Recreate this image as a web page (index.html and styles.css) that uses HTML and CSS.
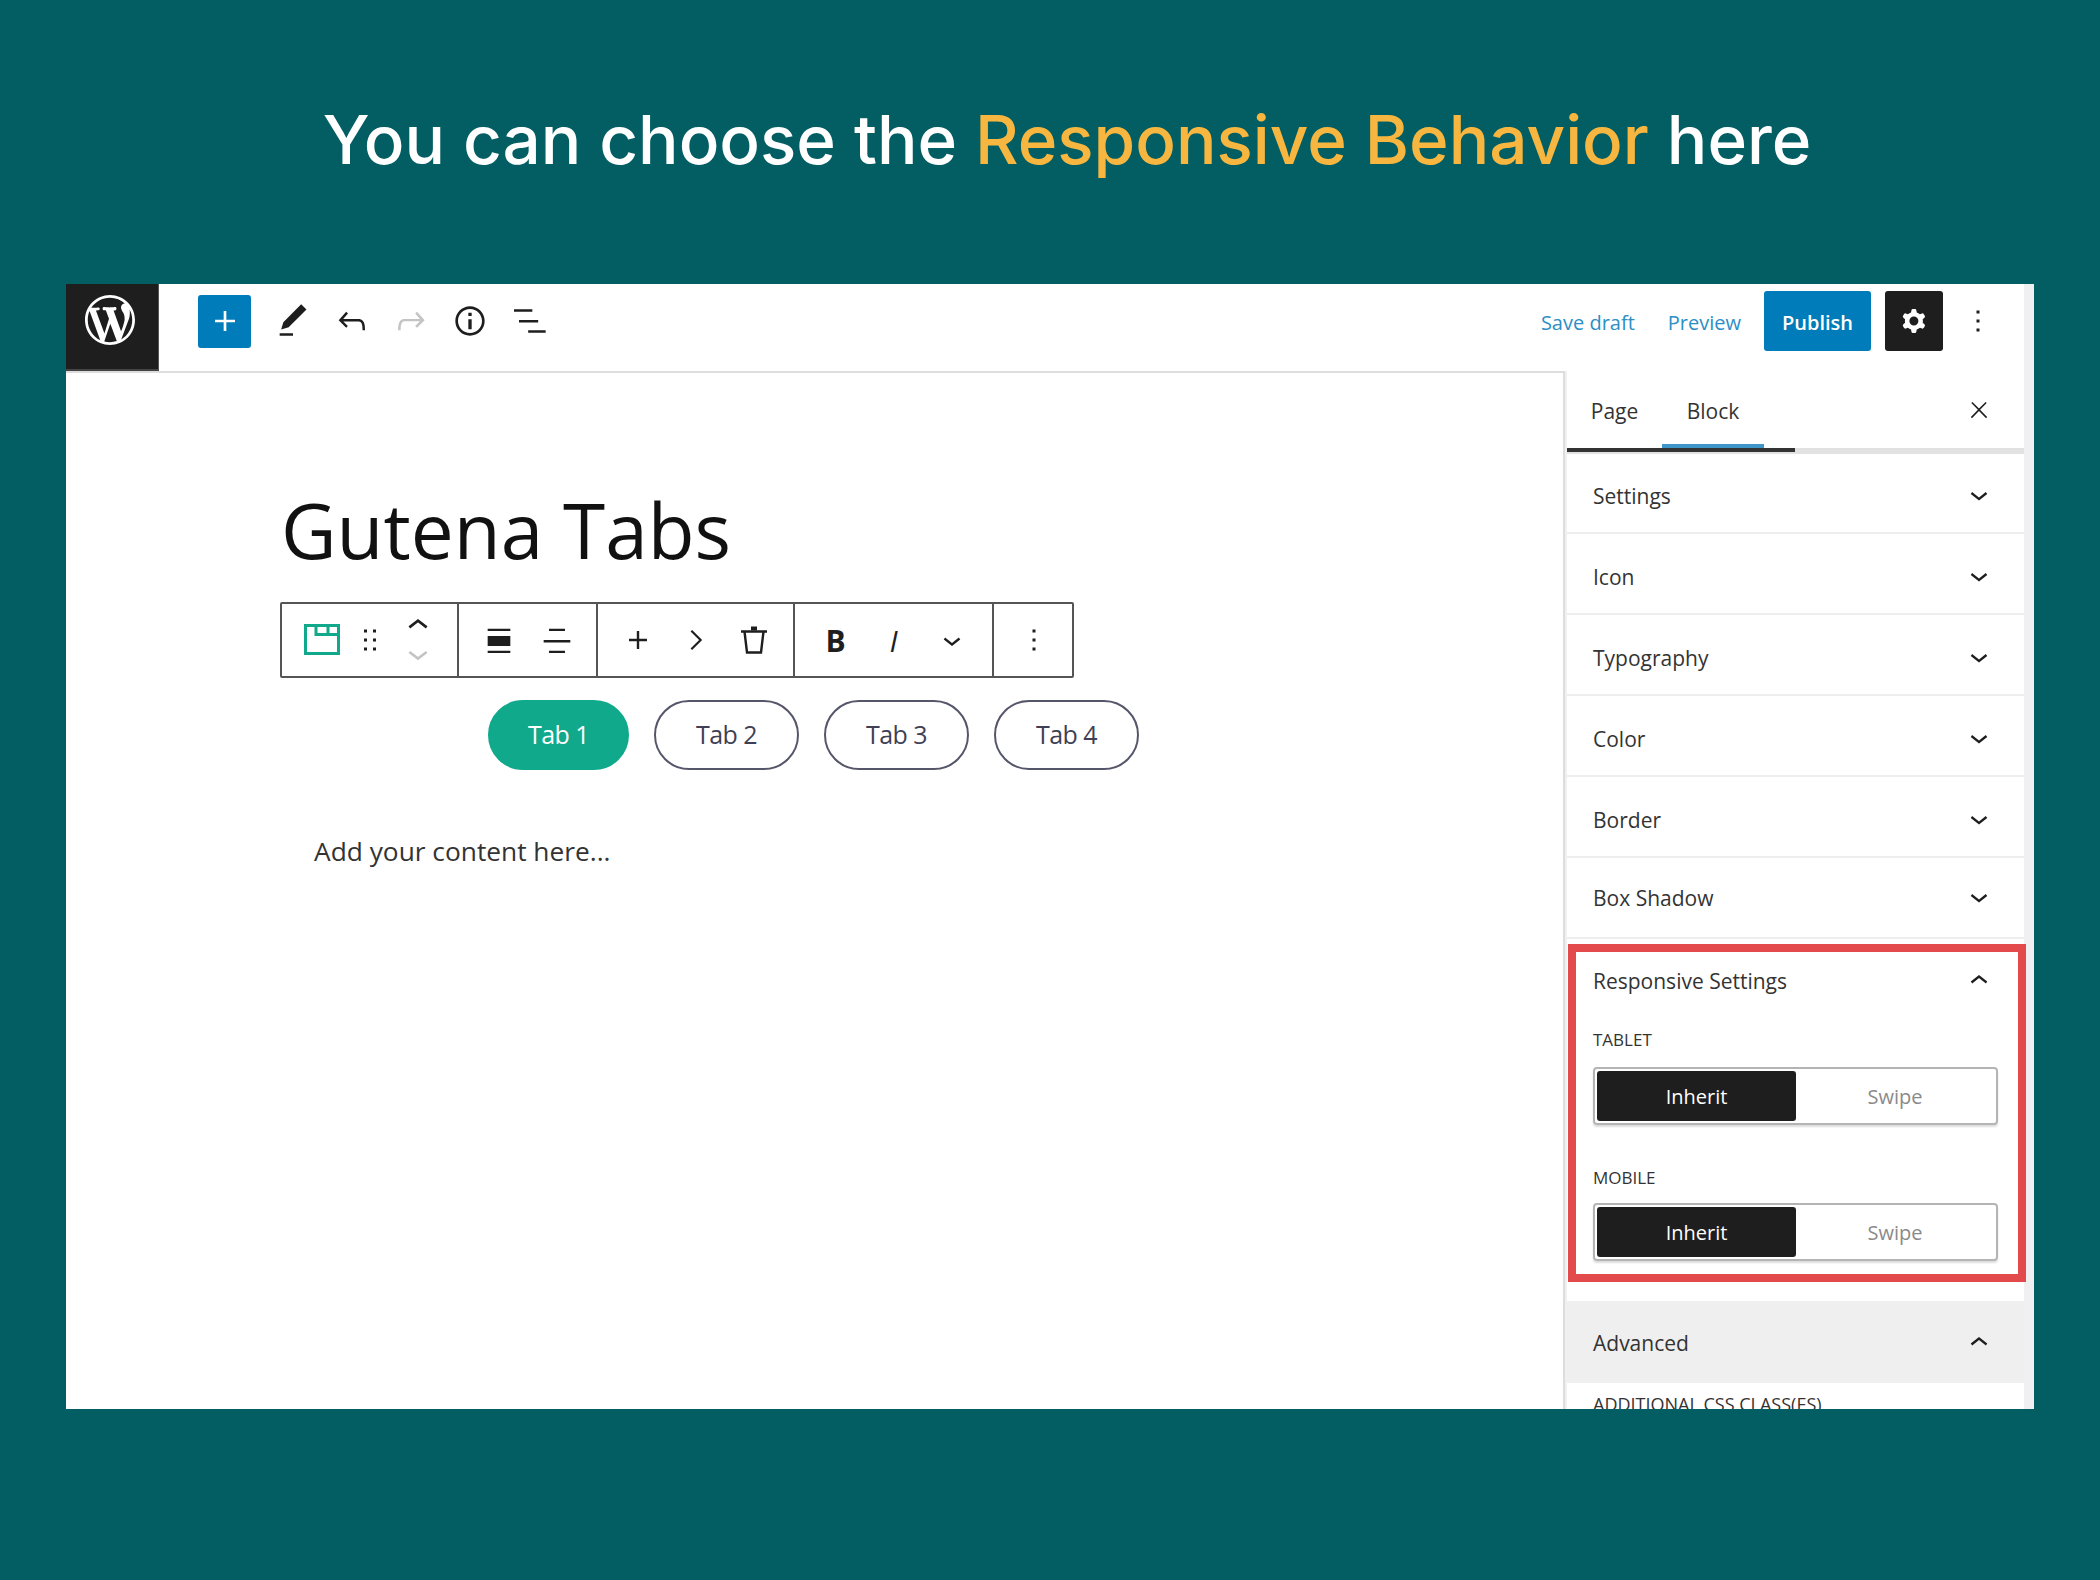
FILE: index.html
```html
<!DOCTYPE html>
<html lang="en">
<head>
<meta charset="utf-8">
<title>Responsive Behavior</title>
<link rel="stylesheet" href="styles.css">
</head>
<body>
<h1 class="headline">You can choose the <span class="accent">Responsive Behavior</span> here</h1>
<div class="frame">
  <header class="topbar">
    <div class="wp-block">
      <svg class="wp-logo" viewBox="0 0 20 20"><path fill="#fff" d="M20 10c0-5.51-4.49-10-10-10C4.48 0 0 4.49 0 10c0 5.52 4.48 10 10 10 5.51 0 10-4.48 10-10zM7.78 15.37L4.37 6.22c.55-.02 1.17-.08 1.17-.08.5-.06.44-1.13-.06-1.11 0 0-1.45.11-2.37.11-.18 0-.37 0-.58-.01C4.12 2.69 6.87 1.11 10 1.11c2.33 0 4.45.87 6.05 2.34-.68-.11-1.65.39-1.65 1.58 0 .74.45 1.36.9 2.1.35.61.55 1.36.55 2.46 0 1.49-1.4 5-1.4 5l-3.03-8.37c.54-.02.82-.17.82-.17.5-.05.44-1.25-.06-1.22 0 0-1.44.12-2.38.12-.87 0-2.33-.12-2.33-.12-.5-.03-.56 1.2-.06 1.22l.92.08 1.26 3.41zM17.41 10c.24-.64.74-1.87.43-4.25.7 1.29 1.05 2.71 1.05 4.25 0 3.29-1.73 6.24-4.4 7.78.97-2.59 1.94-5.2 2.92-7.78zM6.1 18.09C3.12 16.65 1.11 13.53 1.11 10c0-1.3.23-2.48.72-3.59C3.25 10.3 4.67 14.2 6.1 18.09zm4.03-6.63l2.58 6.98c-.86.29-1.76.45-2.71.45-.79 0-1.57-.11-2.29-.33.81-2.38 1.62-4.74 2.42-7.1z"/></svg>
    </div>
    <div class="tools">
      <span class="inserter"><svg class="ico-lg" viewBox="0 0 24 24"><path fill="#fff" d="M18 11.2h-5.2V6h-1.6v5.2H6v1.6h5.2V18h1.600v-5.200H18z"/></svg></span>
      <span class="tool"><svg class="ico-lg" viewBox="0 0 24 24"><path fill="#1e1e1e" d="M20.1 5.1L16.9 2 6.2 12.7l-1.3 4.4 4.5-1.3L20.1 5.1zM4 20.8h8v-1.500H4v1.500z"/></svg></span>
      <span class="tool"><svg class="ico-lg" viewBox="0 0 24 24"><path fill="#1e1e1e" d="M18.3 11.7c-.6-.6-1.4-.9-2.3-.9H6.7l2.9-3.3-1.1-1-4.5 5L8.5 16l1-1-2.7-2.7H16c.5 0 .9.2 1.3.5 1 1 1 3.4 1 4.5v.3h1.5v-.2c0-1.5 0-4.3-1.5-5.7z"/></svg></span>
      <span class="tool"><svg class="ico-lg" viewBox="0 0 24 24"><path fill="#c4c4c4" d="M15.6 6.5l-1.1 1 2.9 3.3H8c-.9 0-1.7.3-2.3.9-1.4 1.5-1.4 4.2-1.4 5.6v.2h1.5v-.3c0-1.1 0-3.5 1-4.5.3-.3.7-.5 1.3-.5h9.2L14.5 15l1.1 1.1 4.6-4.6-4.6-5z"/></svg></span>
      <span class="tool"><svg class="ico-lg" viewBox="0 0 24 24"><path fill="#1e1e1e" d="M12 3.2c-4.8 0-8.8 3.9-8.8 8.8 0 4.8 3.9 8.800 8.800 8.800 4.800 0 8.800-3.900 8.800-8.800 0-4.800-4-8.800-8.800-8.800zm0 16c-4 0-7.200-3.300-7.200-7.200C4.800 8 8 4.800 12 4.800s7.200 3.300 7.200 7.200c0 4-3.200 7.200-7.200 7.200zM11 17h2v-6h-2v6zm0-8h2V7h-2v2z"/></svg></span>
      <span class="tool"><svg class="ico-lg" viewBox="0 0 24 24"><path fill="#1e1e1e" d="M3 5h11v1.500H3zM6 11.400h11.500v1.500H6zM11.500 17.600H22v1.500H11.500z"/></svg></span>
    </div>
    <div class="actions">
      <span class="link">Save draft</span>
      <span class="link">Preview</span>
      <span class="publish">Publish</span>
      <span class="settings"><svg class="ico-md" viewBox="0 0 24 24"><path fill="#fff" fill-rule="evenodd" d="M10.289 4.836A1 1 0 0111.275 4h1.306a1 1 0 01.987.836l.244 1.466c.787.26 1.503.679 2.108 1.218l1.393-.522a1 1 0 011.216.437l.653 1.13a1 1 0 01-.23 1.273l-1.148.944a6.025 6.025 0 010 2.435l1.149.946a1 1 0 01.23 1.272l-.653 1.13a1 1 0 01-1.216.437l-1.394-.522c-.605.54-1.32.958-2.108 1.218l-.244 1.466a1 1 0 01-.987.836h-1.306a1 1 0 01-.986-.836l-.244-1.466a5.995 5.995 0 01-2.108-1.218l-1.394.522a1 1 0 01-1.217-.436l-.653-1.131a1 1 0 01.23-1.272l1.149-.946a6.026 6.026 0 010-2.435l-1.148-.944a1 1 0 01-.23-1.272l.653-1.131a1 1 0 011.217-.437l1.393.522a5.994 5.994 0 012.108-1.218l.244-1.466zM14.929 12a3 3 0 11-6 0 3 3 0 016 0z"/></svg></span>
      <span class="kebab"><svg class="ico-md" viewBox="0 0 24 24"><path fill="#1e1e1e" d="M13 19h-2v-2h2v2zm0-6h-2v-2h2v2zm0-6h-2V5h2v2z"/></svg></span>
    </div>
  </header>
  <div class="workspace">
    <main class="canvas">
      <div class="post-title">Gutena Tabs</div>
      <div class="block-toolbar">
        <div class="tb-group">
          <span class="tb-btn"><svg class="ico-table" viewBox="0 0 36 32"><path fill="none" stroke="#10a98b" stroke-width="3" d="M1.500 1.500h33v28h-33zM12 1.500V10.500h22.500M24 1.500v9"/></svg></span>
          <span class="tb-btn tb-narrow"><svg class="ico-md" viewBox="0 0 24 24"><path fill="#1e1e1e" d="M8 7h2V5H8v2zm0 6h2v-2H8v2zm0 6h2v-2H8v2zm6-14v2h2V5h-2zm0 8h2v-2h-2v2zm0 6h2v-2h-2v2z"/></svg></span>
          <span class="tb-btn"><svg class="ico-mover" viewBox="0 0 24 36"><path fill="none" stroke="#1e1e1e" stroke-width="2" d="M5.500 8.500l6.500-5 6.500 5"/><path fill="none" stroke="#c4c4c4" stroke-width="2" d="M5.500 27l6.500 5 6.500-5"/></svg></span>
        </div>
        <div class="tb-group">
          <span class="tb-btn"><svg class="ico" viewBox="0 0 24 24"><path fill="#1e1e1e" d="M3.500 3.500h17v1.800h-17zM3.500 9h17v7.500h-17zM3.500 20h17v1.800h-17z"/></svg></span>
          <span class="tb-btn"><svg class="ico" viewBox="0 0 24 24"><path fill="#1e1e1e" d="M6 3.500h12v1.800H6zM2 12h20v1.800H2zM6 20h12v1.800H6z"/></svg></span>
        </div>
        <div class="tb-group">
          <span class="tb-btn"><svg class="ico-md" viewBox="0 0 24 24"><path fill="#1e1e1e" d="M18 11.200h-5.200V6h-1.600v5.200H6v1.600h5.200V18h1.600v-5.200H18z"/></svg></span>
          <span class="tb-btn"><svg class="ico" viewBox="0 0 24 24"><path fill="none" stroke="#1e1e1e" stroke-width="1.600" d="M8.500 5l7 7-7 7"/></svg></span>
          <span class="tb-btn"><svg class="ico" viewBox="0 0 32 32"><path fill="none" stroke="#1e1e1e" stroke-width="2.400" d="M3 7.500h26M6.500 7.500l2.500 21h14l2.500-21"/><path fill="#1e1e1e" d="M13 2.500h6v4h-6z"/></svg></span>
        </div>
        <div class="tb-group tb-group-text">
          <span class="tb-btn tb-bold">B</span>
          <span class="tb-btn tb-italic">I</span>
          <span class="tb-btn"><svg class="ico-md" viewBox="0 0 24 24"><path fill="#1e1e1e" d="M17.500 11.600L12 16l-5.500-4.400.9-1.200L12 14l4.500-3.600 1 1.200z"/></svg></span>
        </div>
        <div class="tb-group">
          <span class="tb-btn"><svg class="ico-md" viewBox="0 0 24 24"><path fill="#1e1e1e" d="M13 19h-2v-2h2v2zm0-6h-2v-2h2v2zm0-6h-2V5h2v2z"/></svg></span>
        </div>
      </div>
      <div class="tabs">
        <span class="tab tab-active">Tab 1</span>
        <span class="tab">Tab 2</span>
        <span class="tab">Tab 3</span>
        <span class="tab">Tab 4</span>
      </div>
      <p class="placeholder">Add your content here...</p>
    </main>
    <aside class="sidebar">
      <div class="side-inner">
        <div class="side-tabs">
          <span class="side-tab">Page</span>
          <span class="side-tab side-tab-active">Block</span>
          <svg class="side-close" viewBox="0 0 24 24"><path fill="#1e1e1e" d="M13 11.800l6.100-6.300-1-1-6.100 6.200-6.100-6.200-1 1 6.100 6.300-6.500 6.700 1 1 6.500-6.600 6.500 6.600 1-1z"/></svg>
        </div>
        <div class="side-track"><div class="side-thumb"></div></div>
        <div class="panel-row panel-row-first"><span>Settings</span><svg class="ico-md" viewBox="0 0 24 24"><path fill="#1e1e1e" d="M17.500 10.600L12 15l-5.500-4.400.9-1.200L12 13l4.500-3.600 1 1.200z"/></svg></div>
        <div class="panel-row"><span>Icon</span><svg class="ico-md" viewBox="0 0 24 24"><path fill="#1e1e1e" d="M17.500 10.600L12 15l-5.500-4.400.9-1.200L12 13l4.500-3.600 1 1.200z"/></svg></div>
        <div class="panel-row"><span>Typography</span><svg class="ico-md" viewBox="0 0 24 24"><path fill="#1e1e1e" d="M17.500 10.600L12 15l-5.500-4.400.9-1.200L12 13l4.500-3.600 1 1.200z"/></svg></div>
        <div class="panel-row"><span>Color</span><svg class="ico-md" viewBox="0 0 24 24"><path fill="#1e1e1e" d="M17.500 10.600L12 15l-5.500-4.400.9-1.200L12 13l4.500-3.600 1 1.200z"/></svg></div>
        <div class="panel-row"><span>Border</span><svg class="ico-md" viewBox="0 0 24 24"><path fill="#1e1e1e" d="M17.500 10.600L12 15l-5.500-4.400.9-1.200L12 13l4.500-3.600 1 1.200z"/></svg></div>
        <div class="panel-row panel-row-last"><span>Box Shadow</span><svg class="ico-md" viewBox="0 0 24 24"><path fill="#1e1e1e" d="M17.500 10.600L12 15l-5.500-4.400.9-1.200L12 13l4.500-3.600 1 1.200z"/></svg></div>
        <section class="responsive">
          <div class="resp-head"><span>Responsive Settings</span><svg class="ico-md" viewBox="0 0 24 24"><path fill="#1e1e1e" d="M6.500 12.400L12 8l5.500 4.400-.9 1.200L12 10l-4.500 3.600-1-1.200z"/></svg></div>
          <div class="field-label">TABLET</div>
          <div class="segment"><span class="seg seg-on">Inherit</span><span class="seg">Swipe</span></div>
          <div class="field-label field-label-second">MOBILE</div>
          <div class="segment segment-second"><span class="seg seg-on">Inherit</span><span class="seg">Swipe</span></div>
        </section>
        <div class="advanced"><span>Advanced</span><svg class="ico-md" viewBox="0 0 24 24"><path fill="#1e1e1e" d="M6.500 12.400L12 8l5.500 4.400-.9 1.200L12 10l-4.500 3.600-1-1.200z"/></svg></div>
        <div class="field-label field-label-adv">ADDITIONAL CSS CLASS(ES)</div>
      </div>
    </aside>
  </div>
</div>
</body>
</html>
```
FILE: styles.css
```css
* { box-sizing: border-box; }
html, body { margin: 0; padding: 0; }
body {
  width: 2100px;
  height: 1580px;
  background: #025e63;
  overflow: hidden;
  font-family: "Open Sans", "Noto Sans", sans-serif;
  padding-top: 92px;
}
.headline {
  margin: 0;
  height: 192px;
  line-height: 96px;
  text-align: center;
  font-family: Inter, "Liberation Sans", sans-serif;
  font-size: 67.4px;
  font-weight: 500;
  color: #fff;
  padding-left: 34px;
}
.accent { color: #f6b63f; }

.frame {
  width: 1968px;
  height: 1125px;
  margin-left: 66px;
  padding-right: 10px;
  background: #f0f0f3;
  display: flex;
  flex-direction: column;
  overflow: hidden;
  color: #1e1e1e;
}
.topbar { height: 87px; display: flex; flex: none; background: #fff; }
.wp-block {
  width: 93px;
  background: #1e1e1e;
  border-right: 1px solid #555;
  border-bottom: 2px solid #444;
  display: flex;
  align-items: center;
  justify-content: center;
  padding: 0 4px 13px 0;
}
.wp-logo { width: 50px; height: 50px; }
.ico { width: 32px; height: 32px; flex: none; display: block; }
.ico-md { width: 36px; height: 36px; flex: none; display: block; }
.ico-lg { width: 40px; height: 40px; flex: none; display: block; }
.tools {
  display: flex;
  align-items: center;
  padding: 0 0 13px 39px;
}
.inserter {
  width: 53px;
  height: 53px;
  background: #007cba;
  border-radius: 3px;
  display: flex;
  align-items: center;
  justify-content: center;
  margin-right: 12px;
}
.tool { width: 59px; display: flex; justify-content: center; }
.actions {
  margin-left: auto;
  display: flex;
  align-items: center;
  padding: 0 28px 13px 0;
}
.link { font-size: 20px; color: #2c8fc5; margin-right: 33px; padding-top: 2px; }
.link + .link { margin-right: 23px; }
.publish {
  width: 107px;
  height: 60px;
  background: #007cba;
  color: #fff;
  font-size: 20px;
  font-weight: 600;
  border-radius: 3px;
  display: flex;
  align-items: center;
  justify-content: center;
  padding-top: 2px;
  margin-right: 14px;
}
.settings {
  width: 58px;
  height: 60px;
  background: #1e1e1e;
  border-radius: 3px;
  display: flex;
  align-items: center;
  justify-content: center;
  margin-right: 17px;
}
.workspace { flex: 1; display: flex; min-height: 0; }
.canvas {
  width: 1499px;
  flex: none;
  background: #fff;
  border-top: 2px solid #ddd;
  border-right: 2px solid #ddd;
  padding: 0 0 0 214px;
}
.post-title {
  font-size: 76.5px;
  line-height: 106px;
  margin-top: 103px;
  height: 126px;
  color: #111;
  padding-left: 1px;
}
.block-toolbar {
  display: inline-flex;
  height: 76px;
  width: 794px;
  border: 2px solid #555;
  border-radius: 2px;
  vertical-align: top;
}
.tb-group {
  display: flex;
  align-items: center;
  padding: 0 10.5px;
  border-right: 2px solid #555;
}
.tb-group-text { padding: 0 11.5px; }
.tb-group:last-child { border-right: 0; }
.tb-btn {
  width: 58px;
  display: flex;
  justify-content: center;
  align-items: center;
  font-size: 30px;
  color: #1e1e1e;
}
.tb-narrow { width: 38px; }
.tb-bold { font-weight: 700; }
.tb-italic { font-style: italic; font-weight: 400; }
.ico-table { width: 36px; height: 32px; display: block; }
.ico-mover { width: 32px; height: 48px; display: block; }
.tabs {
  display: flex;
  gap: 25px;
  margin: 22px 0 0 208px;
}
.tab {
  width: 145px;
  height: 70px;
  border: 2px solid #55566a;
  border-radius: 35px;
  display: flex;
  align-items: center;
  justify-content: center;
  padding-bottom: 2px;
  font-size: 25px;
  letter-spacing: -0.5px;
  color: #3f3f55;
}
.tab-active {
  width: 141px;
  background: #10a98b;
  border-color: #10a98b;
  color: #fff;
}
.placeholder {
  margin: 59px 0 0 34px;
  font-size: 26.3px;
  line-height: 44px;
  color: #333;
}
.sidebar {
  flex: 1;
  padding-left: 2px;
  min-width: 0;
}
.side-inner { background: #fff; height: 100%; }
.side-tabs {
  height: 77px;
  display: flex;
  align-items: stretch;
  font-size: 21px;
}
.side-tab {
  width: 95px;
  display: flex;
  align-items: center;
  justify-content: center;
  padding-top: 3px;
  color: #333;
}
.side-tab-active {
  width: 102px;
  box-shadow: inset 0 -4px 0 #3f96c8;
}
.side-close { width: 26px; height: 26px; flex: none; margin: 26px 32px 0 auto; }
.side-track { height: 6px; background: #e2e2e2; }
.side-thumb { width: 228px; height: 4px; background: #333; }
.panel-row {
  height: 81px;
  border-bottom: 2px solid #eee;
  display: flex;
  align-items: center;
  justify-content: space-between;
  padding: 6px 27px 0 26px;
  font-size: 21px;
  color: #333;
}
.panel-row-first { height: 80px; }
.panel-row-last { padding-top: 0; }
.responsive {
  margin: 5px -2px 0 1px;
  height: 338px;
  border: 8px solid #e34a4b;
  padding: 0 20px 0 17px;
}
.resp-head {
  height: 58px;
  display: flex;
  align-items: center;
  justify-content: space-between;
  font-size: 21px;
  color: #333;
  padding-right: 1px;
}
.field-label { font-size: 17px; line-height: 22px; color: #333; margin-top: 19px; }
.field-label-second { margin-top: 42px; }
.segment {
  display: flex;
  height: 58px;
  margin-top: 16px;
  padding: 2px;
  border: 2px solid #b4b4b4;
  border-radius: 4px;
  box-shadow: 0 2px 2px #ddd;
}
.segment-second { margin-top: 14px; }
.seg {
  flex: 1;
  display: flex;
  align-items: center;
  justify-content: center;
  font-size: 20px;
  color: #8a8a8a;
}
.seg-on {
  flex: none;
  width: 199px;
  background: #1e1e1e;
  color: #fff;
  border-radius: 3px;
}
.advanced {
  margin-top: 19px;
  height: 82px;
  background: #efefef;
  display: flex;
  align-items: center;
  justify-content: space-between;
  padding: 2px 27px 0 26px;
  font-size: 21px;
  color: #333;
}
.field-label-adv { font-size: 18px; margin: 10px 0 0 26px; white-space: nowrap; }
```
